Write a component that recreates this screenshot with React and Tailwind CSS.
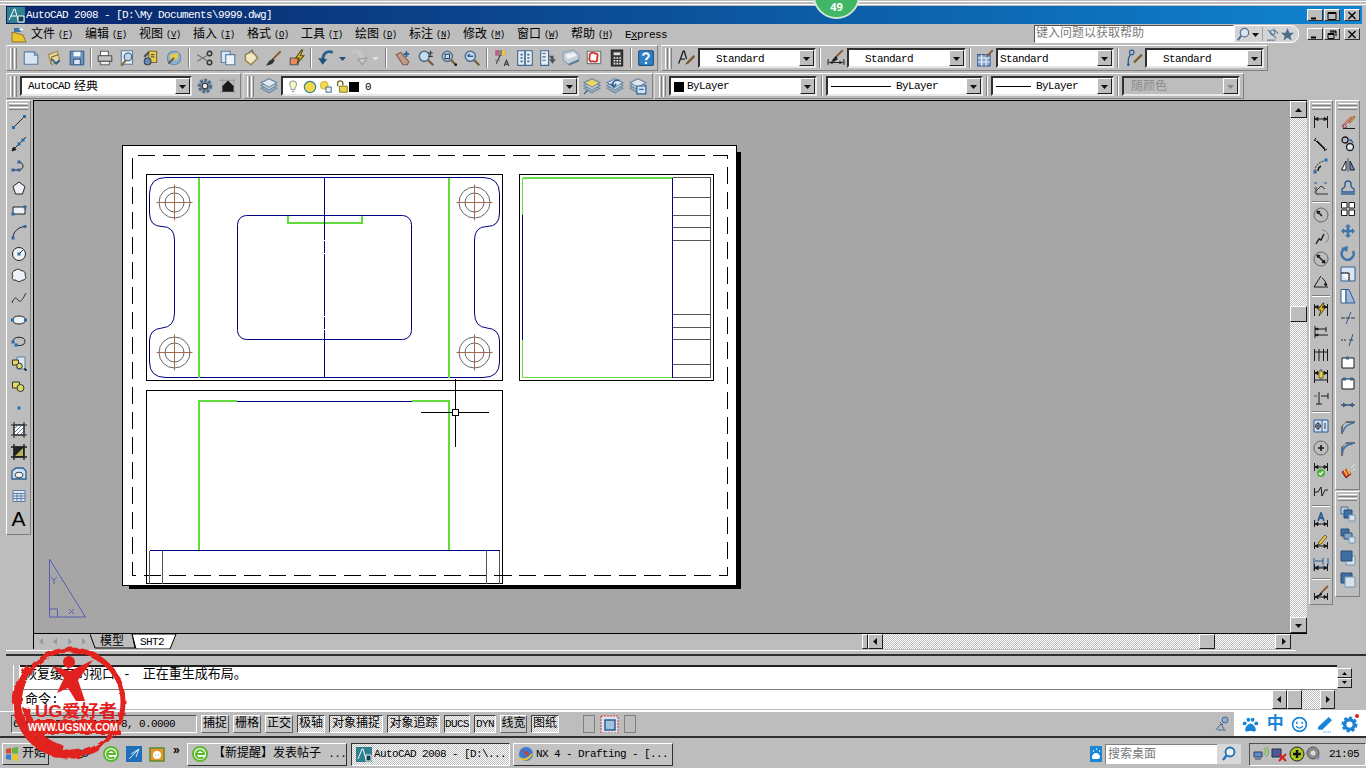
import React from "react";

const dither = "bg-[repeating-conic-gradient(#ffffff_0_25%,#bdbdbd_0_50%)] bg-[length:2px_2px]";
const raised = "border border-t-white border-l-white border-r-[#303030] border-b-[#303030]";
const sunken = "border border-t-[#505050] border-l-[#505050] border-r-white border-b-white";

const L = ({ children }) => <span className="text-[11px] tracking-[-0.6px]">{children}</span>;

const Ic = ({ children, s = 16 }) => (
  <svg width={s} height={s} viewBox="0 0 16 16" fill="none" stroke="#1a1a1a" strokeWidth="1" className="shrink-0">
    {children}
  </svg>
);
const Pt = ({ x, y }) => <rect x={x - 1.5} y={y - 1.5} width="3" height="3" fill="#2a6aa8" stroke="none" />;
const Dim = () => <path d="M1.5 2v12M14.5 2v12M2 5h12M2 5l3-1.5v3zM14 5l-3-1.5v3z" fill="#1a1a1a" />;
const DimLow = () => <path d="M1.5 8v7M14.5 8v7M2 12h12M2 12l3-1.5v3zM14 12l-3-1.5v3z" fill="#1a1a1a" />;
const Glass = ({ c = "#c8dcf0" }) => (
  <>
    <circle cx="6.5" cy="6.5" r="4.5" fill={c} stroke="#55708f" strokeWidth="1.4" />
    <path d="M10 10l4.5 4.5" stroke="#7a5a30" strokeWidth="2" />
  </>
);
const Layers = ({ top = "#dfe8f0" }) => (
  <>
    <path d="M1 10l7-3.5L15 10l-7 4z" fill="#9fb3c4" stroke="#6f8aa0" />
    <path d="M1 7.5L8 4l7 3.5L8 11.5z" fill="#c5d3de" stroke="#6f8aa0" />
    <path d="M1 5l7-3.5L15 5 8 9z" fill={top} stroke="#6f8aa0" />
  </>
);

const std = {
  new: <><path d="M2 2.5h9l3 3v8H2z" fill="#d9e6f2" stroke="#5b7fa3" /><path d="M11 2.5v3h3" stroke="#5b7fa3" /></>,
  open: <><path d="M3 5l8-3 2 8-7 4z" fill="#e9d9a0" stroke="#a08a4a" /><path d="M12 5l-6 2-1 6" stroke="#8a7236" /><path d="M6 9l4 4 3-3" stroke="#2c5d94" strokeWidth="1.6" /></>,
  save: <><path d="M2 2h12v12H2z" fill="#6f94bd" stroke="#365f8c" /><path d="M5 2.5h6v4H5z" fill="#f2f5f8" stroke="none" /><path d="M5 9h6v5H5z" fill="#dfe6ee" stroke="#365f8c" /></>,
  plot: <><path d="M4 2h7v4H4z" fill="#fff" stroke="#666" /><path d="M2 6h12v5H2z" fill="#c4c4c4" stroke="#555" /><path d="M4 11h8v3H4z" fill="#eee" stroke="#666" /></>,
  prev: <><path d="M2 1.5h10v12H2z" fill="#e4eef6" stroke="#5b7fa3" /><circle cx="8" cy="7" r="3.4" fill="#bcd6ea" stroke="#456" /><path d="M6 10l-4 5" stroke="#8a6a30" strokeWidth="1.8" /></>,
  publish: <><path d="M6 2h7v10H6z" fill="#e7c94f" stroke="#7c6a24" /><path d="M2 7l4-4" stroke="#555" strokeWidth="2" /><circle cx="5" cy="11" r="3" fill="#6a87b5" stroke="#345" /><path d="M8 5h3M8 7h3" stroke="#555" /></>,
  dwf: <><circle cx="8" cy="8" r="6" fill="#8db0d0" stroke="#6a8aa8" /><path d="M4 5l8-2-1 6-6 2z" fill="#e7c94f" stroke="none" /><path d="M3 13l5-5" stroke="#555" strokeWidth="1.6" /></>,
  cut: <><circle cx="12" cy="4" r="2" stroke="#333" strokeWidth="1.3" /><circle cx="12" cy="12" r="2" stroke="#333" strokeWidth="1.3" /><path d="M1 5l10 6M1 11l10-6" stroke="#666" /></>,
  copy: <><path d="M2 2h8v10H2z" fill="#d9e6f2" stroke="#5b7fa3" /><path d="M6 5h8v9H6z" fill="#edf3f9" stroke="#5b7fa3" /></>,
  paste: <><path d="M3 5l6-3 5 6-6 6-5-4z" fill="#efe7c5" stroke="#9a8340" strokeWidth="1.3" /><path d="M6 3l3-2 1 3" fill="#aaa" stroke="#666" /></>,
  brush: <><path d="M14 2L7 9" stroke="#8a5a30" strokeWidth="1.7" /><path d="M7 9l-3 2-2 3 4-1 2-3z" fill="#333" stroke="#333" /></>,
  block: <><path d="M2 8h7v6H2z" fill="#e98a60" stroke="#555" /><path d="M12 1L7 8h3l-2 5 6-7h-3l2-5z" fill="#e9c52c" stroke="#5a4a10" /></>,
  undo: <><path d="M14 3c-5-2-9 1-9 7" stroke="#2c5d94" strokeWidth="2.4" /><path d="M1 8l4 6 4-5z" fill="#22507f" stroke="none" /></>,
  redo: <><path d="M2 3c5-2 9 1 9 7" stroke="#d5d5d5" strokeWidth="2.6" /><path d="M2 3c5-2 9 1 9 7" stroke="#9a9a9a" strokeWidth="0.6" /><path d="M15 8l-4 6-4-5z" fill="#c9c9c9" stroke="#999" /></>,
  pan: <><path d="M2 5l6 9h4l1-3-7-8z" fill="#bf9a85" stroke="#855f55" /><path d="M11 2v5M8.5 4.5h5" stroke="#2c5d94" strokeWidth="1.6" /></>,
  zoomR: <><Glass /><path d="M12 1.5v4M10 3.5h4M10 6.5h4" stroke="#333" /></>,
  zoomW: <><Glass /><path d="M4.5 4.5h4v4h-4z" stroke="#345" /><path d="M13 13h2v2h-2z" fill="#111" stroke="none" /></>,
  zoomP: <><Glass /><path d="M4 6.5h5M4 6.5l2-2" stroke="#2c5d94" strokeWidth="1.3" /></>,
  props: <><path d="M2 1h9v5H2z" fill="#d44f9a" stroke="none" /><path d="M5 1h2v5H5z" fill="#4fb34f" stroke="none" /><path d="M8 1h3v5H8z" fill="#e7c94f" stroke="none" /><path d="M3 13l3-7h1M10 15l2-5 2 5M11 13.5h2" stroke="#333" /><path d="M2 10h4" stroke="#777" /></>,
  design: <><path d="M1.5 1.5h13v13h-13z" fill="#e4eef6" stroke="#44688c" /><path d="M8 1.5v13M4 5h2M10 5h2M4 8h2M10 8h2M4 11h2M10 11h2" stroke="#44688c" strokeWidth="1.5" /></>,
  tool: <><path d="M1.5 1.5h7v13h-7z" fill="#e4eef6" stroke="#44688c" /><path d="M3 4h3M3 7h3M3 10h3" stroke="#44688c" /><path d="M9 6l4 0v3h2l-3 4-3-4h2z" fill="#555" stroke="none" /></>,
  sheet: <><path d="M1 3l9-2 5 4v5L6 14 1 10z" fill="#c4cfd9" stroke="#8aa0b4" /><path d="M3 5l8-2 2 3-8 3z" fill="#eef2f6" stroke="none" /><path d="M6 14l9-4" stroke="#5f7d9a" strokeWidth="2" /></>,
  markup: <><path d="M2 2h12v11H2z" fill="#ececec" stroke="#777" /><path d="M5 4c2-2 3 0 4 0s3 0 2 3 1 3-1 4-3-1-4 0-3-2-2-3-1-3 1-4z" fill="#fff" stroke="#d0342c" strokeWidth="1.6" /></>,
  calc: <><path d="M3 1h10v14H3z" fill="#3a3a3a" stroke="#222" /><path d="M5 3h6v2.5H5z" fill="#ddd" stroke="none" /><path d="M5 8h1.5M7.5 8h1.5M10 8h1.5M5 10.5h1.5M7.5 10.5h1.5M10 10.5h1.5M5 13h1.5M7.5 13h1.5M10 13h1.5" stroke="#eee" strokeWidth="1.4" /></>,
  help: <><path d="M1.5 2.5q0-1 1-1h11q1 0 1 1v11q0 1-1 1h-11q-1 0-1-1z" fill="#2f7fc4" stroke="#1c4f84" /><path d="M5.5 6c0-3 5-3 5 0 0 2-2.5 2-2.5 4" stroke="#fff" strokeWidth="1.8" /><path d="M7 11.5h2v2H7z" fill="#fff" stroke="none" /></>,
  textS: <><path d="M1.5 13L5.5 2h1l2 7M3 9h4" stroke="#222" strokeWidth="1.2" /><path d="M15 5l-6 6-2 3 3-1 6-6z" fill="#7a5a30" stroke="none" /></>,
  dimS: <><path d="M14 1L7 8" stroke="#8a5a30" strokeWidth="1.8" /><path d="M8 7l-3 3 1 1 3-2z" fill="#222" stroke="#222" /><path d="M1 9v5M15 9v5M2 12h12" stroke="#222" /><path d="M2 12l3-1.5v3zM14 12l-3-1.5v3z" fill="#222" stroke="none" /></>,
  tableS: <><path d="M1.5 5h11v10h-11z" fill="#8aa8d0" stroke="#3a5f94" /><path d="M1.5 8h11M1.5 11.5h11M5 5v10M9 5v10" stroke="#e8eef6" /><path d="M15 1L9 7" stroke="#8a5a30" strokeWidth="1.8" /></>,
  leadS: <><circle cx="6" cy="3" r="2" stroke="#2c5d94" /><path d="M5 5C2 8 3 11 3 14" stroke="#2c5d94" strokeWidth="1.2" /><circle cx="3" cy="14" r="1.2" fill="#2c5d94" stroke="none" /><path d="M15 5L8 12" stroke="#7a5a30" strokeWidth="2" /></>,
  wsGear: <><circle cx="8" cy="8" r="5" fill="#8a99a6" stroke="#4c6d8c" strokeWidth="3" strokeDasharray="2.5 1.2" /><circle cx="8" cy="8" r="2.5" fill="#e6e6e6" stroke="#333" /></>,
  wsHouse: <><path d="M1 3h14M1 13h14M3 1v14M13 1v14" stroke="#888" strokeDasharray="1 1" /><path d="M3 8l5-5 5 5v5H3z" fill="#1a1a1a" stroke="none" /></>,
  bulb: <><path d="M3 5a4 4 0 118 0c0 2-2 3-2 6H5c0-3-2-4-2-6z" fill="#fdf5b8" stroke="#6a8aa0" /><path d="M5.5 12.5h3V14h-3z" fill="#9ab" stroke="none" /></>,
  sun: <><circle cx="8" cy="8" r="6.5" fill="#f1d94a" stroke="#3f7f9a" strokeWidth="1.3" /></>,
  frozen: <><circle cx="6" cy="6" r="4.5" fill="#f1d94a" stroke="#c9b040" /><path d="M8 8h6v6H8z" fill="#eaf2f8" stroke="#33566f" /></>,
  lock: <><path d="M3 7V4a3 3 0 016 0v2" stroke="#7a6a1c" strokeWidth="1.6" /><path d="M5 7h9v7H5z" fill="#e6d34a" stroke="#7a6a1c" /></>,
  layerUp: <><Layers top="#ead663" /><path d="M1 15l3-3" stroke="#2c5d94" strokeWidth="1.2" /></>,
  layerBk: <><Layers /><path d="M12 3C6 2 5 6 7 9M4 6l3 3 2-3" stroke="#2c5d94" strokeWidth="1.4" /></>,
  layerSt: <><Layers /><path d="M7 8h8v7H7z" fill="#cfe0f0" stroke="#2c5d94" /><path d="M9 11h4" stroke="#2c5d94" /></>,
};

const lft = [
  <><path d="M2.5 13.5l11-11" stroke="#222" /><Pt x={2.5} y={13.5} /><Pt x={13.5} y={2.5} /></>,
  <><path d="M1 15L15 1" stroke="#222" /><Pt x={8} y={8} /><Pt x={12} y={4} /><path d="M1 15l4-1.5L2.5 11z" fill="#222" /></>,
  <><path d="M1.5 12h6c6 0 6-8 0-8" stroke="#222" /><Pt x={2} y={12} /><Pt x={8} y={12} /><Pt x={8} y={4} /></>,
  <><path d="M8 2l6 4.5-2.5 7.5h-7L2 6.5z" fill="#eef2f6" stroke="#222" /></>,
  <><path d="M2 5h12v7H2z" fill="#eef2f6" stroke="#222" /><Pt x={2} y={12} /><Pt x={14} y={5} /></>,
  <><path d="M2 14C2 8 7 3 14 2.5" stroke="#222" /><Pt x={2} y={14} /><Pt x={14} y={2.5} /></>,
  <><circle cx="8" cy="8" r="6.5" fill="#eef2f6" stroke="#222" /><path d="M8 8l4-4" stroke="#222" /><Pt x={8} y={8} /></>,
  <><path d="M5 2c2-2 5 0 5 1 2-1 5 1 4 4 2 2 0 6-3 5-1 2-5 2-6 0-3 1-5-2-3-4-2-2 0-6 3-6z" fill="#eef2f6" stroke="#222" /></>,
  <><path d="M1 13c2-6 4-6 6-3s4 1 8-7" stroke="#333" /></>,
  <><ellipse cx="8" cy="8" rx="6.5" ry="4" fill="#eef2f6" stroke="#222" /><Pt x={1.5} y={8} /><Pt x={14.5} y={8} /></>,
  <><path d="M2 7c0-5 12-5 12 0s-6 5-9 4" stroke="#222" /><Pt x={2} y={8} /><Pt x={5} y={11} /></>,
  <><path d="M6 1h8v12H6z" fill="#d9e6f2" stroke="#5b7fa3" /><path d="M1.5 4h6v5h-6z" fill="#e7d862" stroke="#333" /><circle cx="8.5" cy="10" r="2.8" fill="#d9d96a" stroke="#333" /><path d="M13 13l2 2v-2z" fill="#111" /></>,
  <><path d="M1.5 4h7v6h-7z" fill="#e7d862" stroke="#333" /><circle cx="9.5" cy="10" r="3.5" fill="#d9d96a" stroke="#333" /></>,
  <><rect x="6.5" y="6.5" width="3" height="3" fill="#2a6aa8" stroke="none" /></>,
  <><path d="M3 3h10v10H3z" fill="#fff" stroke="#222" /><path d="M3 7l4-4M3 11l8-8M5 13l8-8M9 13l4-4" stroke="#5b7fa3" /><path d="M0 3h16M0 13h16M3 0v16M13 0v16" stroke="#222" /></>,
  <><path d="M3 3h10v10H3z" fill="#222" /><path d="M4 12L12 4v8z" fill="#b7b15a" stroke="none" /><path d="M0 3h16M0 13h16M3 0v16M13 0v16" stroke="#222" strokeWidth="1.4" /></>,
  <><path d="M1 5l4-3h7l3 3v8H1z" fill="#cfe0f0" stroke="#2c5d94" strokeWidth="1.3" /><ellipse cx="8" cy="9" rx="4" ry="2.8" fill="#eef2f6" stroke="#444" /></>,
  <><path d="M2 2.5h12v11H2z" fill="#dce6f4" stroke="#5b7fa3" /><path d="M2 5.5h12M2 8h12M2 10.5h12M6 5.5v8M10 5.5v8" stroke="#5b7fa3" /></>,
];

const r1 = [
  [<Dim />, <><path d="M2 4l10 10M3 2l-2 3M14 13l-3 2" /><path d="M4 5l8 8" strokeWidth="1.4" /></>, <><path d="M2 13c0-5 4-9 9-10" strokeDasharray="2 1" stroke="#333" /><path d="M8 8c-2 1-3 3-3 5" strokeWidth="1.4" /><Pt x={2} y={14} /><Pt x={13} y={2} /></>, <><path d="M3 14V7M3 14h12M3 11l5-5 4 3" stroke="#333" /><path d="M1 3h3M11 3h3M1 8h1M1 12h1" stroke="#2c5d94" /></>],
  [<><circle cx="8" cy="8" r="7" stroke="#666" /><path d="M9 9L4 4" strokeWidth="1.5" /><path d="M4 4l3 .5L4.5 7z" fill="#222" /></>, <><path d="M9 1a7 7 0 013 13" stroke="#888" /><path d="M3 15l3-5 2 1 3-6" strokeWidth="1.4" /></>, <><circle cx="8" cy="8" r="7" stroke="#666" /><path d="M4 4l8 8" strokeWidth="1.5" /><path d="M4 4l3 .5L4.5 7zM12 12l-3-.5L11.5 9z" fill="#222" /></>, <><path d="M1 14h14M1 14L8 3" /><path d="M9 5a9 9 0 014 8" /><path d="M13 13l-2-2h3z" fill="#222" /></>],
  [<><Dim /><path d="M10 1L5 8h3l-2 6 6-8H9l2-5z" fill="#e9c52c" stroke="#5a4a10" /></>, <><path d="M2 2v12M13 3v5M2 5h11M2 11h13" /><path d="M2 5l3-1v2zM2 11l3-1v2z" fill="#222" /></>, <><path d="M1.5 3v12M6 3v12M10.5 3v12M14.5 3v12M2 6h12" /></>, <><Dim /><path d="M2 12h12M1.5 9v6M14.5 9v6" /><path d="M6 3h4v7H6z" fill="#e7c94f" stroke="#7a6a1c" /><path d="M8 1v2M8 10v2" stroke="#2c5d94" /></>, <><path d="M6 2v12M3 14h6M12 6H8M12 6h3M15 3v6" /><path d="M1 6h3" stroke="#2c5d94" /></>],
  [<><path d="M1 2h14v12H1z" fill="#cfe0f0" stroke="#2c5d94" /><path d="M9 2v12" stroke="#2c5d94" /><circle cx="5" cy="8" r="2.5" stroke="#333" /><path d="M5 4v8M2 8h6M12 5v6" stroke="#333" /></>, <><circle cx="8" cy="8" r="7" stroke="#666" /><path d="M8 5v6M5 8h6" strokeWidth="1.6" /></>, <><path d="M1.5 1v8M14.5 1v8M2 5h12" /><path d="M2 5l3-1.5v3zM14 5l-3-1.5v3z" fill="#222" /><circle cx="8" cy="11" r="4" fill="#4faf3a" stroke="none" /><path d="M6 11l1.5 1.5L10 9.5" stroke="#fff" strokeWidth="1.3" /></>, <><path d="M1.5 4v8M2 8h3l3-5 1 9 3-6h3" /></>],
  [<><DimLow /><path d="M5 9l3-8 3 8M6 6h4" stroke="#2c5d94" strokeWidth="1.8" /></>, <><DimLow /><path d="M12 1l2 2-6 7-3 1 1-3z" fill="#e7c94f" stroke="#6a5a20" /></>, <><path d="M1 2v13M15 2v7M10 2v7M2 5h8M2 11h13M5 9v5" stroke="#2c5d94" /><DimLow /></>],
  [<><DimLow /><path d="M15 1L7 9" stroke="#8a5a30" strokeWidth="1.8" /><path d="M8 8l-3 3 3-1 1-1z" fill="#222" /></>],
];

const r2 = [
  <><path d="M2 13L12 3" stroke="#c77" strokeWidth="3" /><path d="M9 8l5-6 1 1-5 6z" fill="#e6c84a" stroke="#8a6a20" /><path d="M3 14.5h12" /><path d="M4 10l3 3-3 1-1-1z" fill="#f2a2a2" stroke="#666" /></>,
  <><circle cx="5" cy="4" r="3" strokeWidth="1.3" /><circle cx="10" cy="11" r="3.5" fill="#d9e6f2" strokeWidth="1.3" /><path d="M7 4h4l2 3" stroke="#2c5d94" strokeWidth="1.3" /></>,
  <><path d="M8 1v14" stroke="#2c5d94" /><path d="M6 4v9H1.5z" fill="#fff" /><path d="M10 4v9h4.5z" fill="#6f94bd" /></>,
  <><path d="M2 13V10c0-1 3-1 3-3V5c0-4 6-4 6 0v2c0 2 3 2 3 3v3z" stroke="#2c5d94" strokeWidth="1.4" /><path d="M1 15h14" stroke="#2c5d94" strokeWidth="1.4" /></>,
  <><path d="M1.5 1.5H7V7H1.5zM9 1.5h5.5V7H9zM1.5 9H7v5.5H1.5zM9 9h5.5v5.5H9z" fill="#fff" /></>,
  <><path d="M8 1l3 3H9.3v2.7H12V5l3 3-3 3V9.3H9.3V12H11l-3 3-3-3h1.7V9.3H4V11L1 8l3-3v1.7h2.7V4H5z" fill="#3e74ad" stroke="none" /></>,
  <><path d="M4 4a6 6 0 109 2" stroke="#3e74ad" strokeWidth="2.6" /><path d="M1 3l7-2-1 6z" fill="#3e74ad" stroke="none" /></>,
  <><path d="M1 1h14v14H1z" fill="#d9e6f2" stroke="#2c5d94" /><path d="M1 7h8v8" fill="#fff" /><path d="M1 7h8v8" stroke="#333" strokeDasharray="1 1" fill="none" /></>,
  <><path d="M1 1.5h5V15H1z" fill="#fff" stroke="#2c5d94" /><path d="M6 1.5h3L15 15H6z" fill="#9db9d4" stroke="#2c5d94" /></>,
  <><path d="M1 8h14" stroke="#333" strokeDasharray="4 1" /><path d="M11 2L6 14" stroke="#2c5d94" /></>,
  <><path d="M1 8h6" stroke="#333" strokeDasharray="2 1" /><path d="M9 8h4" stroke="#333" /><path d="M13 2L9 14" stroke="#2c5d94" /></>,
  <><path d="M2 4h12v10H2z" fill="#fff" /><rect x="6" y="2.5" width="3" height="3" fill="#2a6aa8" stroke="none" /></>,
  <><path d="M2 4h12v10H2z" fill="#fff" /><rect x="3" y="2.5" width="3" height="3" fill="#2a6aa8" stroke="none" /><rect x="10" y="2.5" width="3" height="3" fill="#2a6aa8" stroke="none" /></>,
  <><path d="M1 8h14" stroke="#222" /><path d="M7 8L3 5.5v5zM9 8l4-2.5v5z" fill="#2c5d94" stroke="none" /></>,
  <><path d="M6 3h9M2 7v8" /><path d="M2 7l4-4" stroke="#333" strokeDasharray="1 1" /><path d="M3 13C4 8 8 5 14 4" stroke="#3e74ad" strokeWidth="1.5" /></>,
  <><path d="M6 2h9M2 6v9" /><path d="M2 6l4-4" stroke="#333" strokeDasharray="1 1" /><path d="M2.5 12c0-5 4-9 10-9" stroke="#3e74ad" strokeWidth="2" /></>,
  <><path d="M2 9l5-3 4 5-5 4z" fill="#d8392c" stroke="#7a1c1c" /><path d="M4 7l3 5M7 6l3 5" stroke="#e6c84a" strokeWidth="1.5" /><path d="M11 5l4-4M13 7l2-1" stroke="#e6e6e6" /></>,
];
const Order = ({ v }) => (
  <Ic>
    {v === 0 && <><path d="M1 1h7v7H1z" fill="#bcd0e4" stroke="#4c6d8c" /><path d="M4 4h8v8H4z" fill="#3e6ea2" stroke="#2c4f74" /><path d="M9 9h6v6H9z" fill="#d5e2ee" stroke="#7b96ae" /></>}
    {v === 1 && <><path d="M1 1h8v7H1z" fill="#3e6ea2" stroke="#2c4f74" /><path d="M4 5h8v6H4z" fill="#7ea2c6" stroke="#2c4f74" /><path d="M9 9h6v6H9z" fill="#d5e2ee" stroke="#7b96ae" /></>}
    {v === 2 && <><path d="M6 6h9v9H6z" fill="#d5e2ee" stroke="#7b96ae" /><path d="M1 1h11v10H1z" fill="#3e6ea2" stroke="#2c4f74" /></>}
    {v === 3 && <><path d="M1 1h11v10H1z" fill="#3e6ea2" stroke="#2c4f74" /><path d="M5 5h10v10H5z" fill="#d5e2ee" stroke="#7b96ae" /></>}
  </Ic>
);

const T = ({ d }) => <div className="w-[23px] h-full flex items-center justify-center shrink-0"><Ic s={18}>{d}</Ic></div>;
const V = ({ children }) => <div className="h-[22px] flex items-center justify-center shrink-0">{children}</div>;
const Sep = ({ className }) => (
  <div className={`flex justify-center items-center h-full shrink-0 ${className}`}>
    <div className="w-[2px] h-[20px] border-l border-l-[#808080] border-r border-r-white" />
  </div>
);
const HSep = ({ className }) => (
  <div className={`flex items-center justify-center shrink-0 ${className}`}>
    <div className="w-[18px] h-[2px] border-t border-t-[#808080] border-b border-b-white" />
  </div>
);
const Grip = ({ className }) => (
  <div className={`flex justify-center items-center gap-[1px] h-full shrink-0 ${className}`}>
    <div className="w-[3px] h-[21px] border-l border-l-white border-r border-r-[#808080]" />
    <div className="w-[3px] h-[21px] border-l border-l-white border-r border-r-[#808080]" />
  </div>
);
const VGrip = ({ className }) => (
  <div className={`flex flex-col items-center justify-center gap-[1px] shrink-0 ${className}`}>
    <div className="w-[19px] h-[3px] border-t border-t-white border-b border-b-[#808080]" />
    <div className="w-[19px] h-[3px] border-t border-t-white border-b border-b-[#808080]" />
  </div>
);

const Arrow = ({ dir = "down", c = "#111" }) => {
  const p = { down: "M1 3h7L4.5 7z", up: "M1 7h7L4.5 3z", left: "M6 1v7L2 4.5z", right: "M3 1v7l4-3.5z" }[dir];
  return (
    <svg width="9" height="9" viewBox="0 0 9 9">
      <path d={p} fill={c} />
    </svg>
  );
};

const Combo = ({ className, children, disabled }) => (
  <div className={`h-[20px] flex items-center shrink-0 border-2 border-t-[#303030] border-l-[#303030] border-r-[#e8e8e8] border-b-[#e8e8e8] ${disabled ? "bg-[#bdbdbd] text-[#8c8c8c]" : "bg-white text-black"} ${className}`}>
    <div className="flex-1 min-w-0 flex items-center whitespace-nowrap overflow-hidden pt-px">{children}</div>
    <div className="w-[15px] h-[16px] flex items-center justify-center bg-[#bdbdbd] border border-t-white border-l-white border-r-[#202020] border-b-[#202020]">
      <Arrow c={disabled ? "#888" : "#111"} />
    </div>
  </div>
);

const Bar = ({ className, children }) => (
  <div className={`h-[26px] my-auto flex items-center shrink-0 border border-t-white border-l-[#d8d8d8] border-r-[#808080] border-b-[#808080] ${className}`}>{children}</div>
);

const menus = [
  ["文件", "F"], ["编辑", "E"], ["视图", "V"], ["插入", "I"], ["格式", "O"], ["工具", "T"],
  ["绘图", "D"], ["标注", "N"], ["修改", "M"], ["窗口", "W"], ["帮助", "H"],
];

const WinBtn = ({ kind }) => (
  <div className={`w-[16px] h-[12px] flex items-center justify-center bg-[#bdbdbd] ${raised}`}>
    <svg width="10" height="9" viewBox="0 0 10 9" fill="none" stroke="#000">
      {kind === "min" && <path d="M1 7.5h5" strokeWidth="2" />}
      {kind === "max" && <path d="M1 1.5h8v7H1zM1 2.5h8" />}
      {kind === "res" && <path d="M3 1h6v5M3 2h6M1 3.5h6v5H1zM1 4.5h6" />}
      {kind === "x" && <path d="M1.5 1l7 7M8.5 1l-7 7" strokeWidth="1.4" />}
    </svg>
  </div>
);

const Drawing = () => (
  <svg viewBox="34 101 1256 532" width="1256" height="532" className="block shrink-0" fill="none" shapeRendering="crispEdges">
    <path d="M129 152h612v437H129z" fill="#000" />
    <path d="M122.5 145.5h614V585h-614z" fill="#fff" stroke="#000" />
    <path d="M132.5 175V155.5H727V575.5H132.5V175" stroke="#000" strokeDasharray="17 8" />
    <path d="M146.5 174.5h356V380h-356zM519.5 174.5H713V380H519.5zM146.5 390.5h356v193h-356z" stroke="#000" />
    <g shapeRendering="auto">
      <path d="M166 177.5H483Q499.5 177.5 499.5 194V213Q499.5 226.5 487 226.5Q474.5 226.5 474.5 240V313Q474.5 327 487 328Q499.5 329 499.5 341V362Q499.5 377.5 483 377.5H166Q149.5 377.5 149.5 362V341Q149.5 329 162 328Q174.5 327 174.5 313V240Q174.5 226.5 162 226.5Q149.5 226.5 149.5 213V194Q149.5 177.5 166 177.5Z" stroke="#000080" />
      <rect x="237.5" y="215.5" width="174" height="124" rx="9" stroke="#000080" />
      {[[174.5, 202.5], [474.5, 202.5], [174.5, 352.5], [474.5, 352.5]].map(([x, y]) => (
        <g key={x + "-" + y}>
          <circle cx={x} cy={y} r="15.5" stroke="#666" />
          <circle cx={x} cy={y} r="9.5" stroke="#666" />
          <path d={`M${x - 18} ${y}h36M${x} ${y - 18}v36`} stroke="#a5694f" />
        </g>
      ))}
    </g>
    <path d="M199 177.5v200M449 177.5v200M287.5 215.5v7h74v-7" stroke="#5fdc3c" strokeWidth="2" />
    <path d="M324.5 177.5v200" stroke="#000080" strokeDasharray="62 1 12 1" />
    <path d="M522.5 178h150M522.5 377.5h150M522.5 178v37M522.5 340v37.5" stroke="#66dd44" strokeWidth="1.5" />
    <path d="M522.5 215v125M672.5 177.5v200" stroke="#000080" />
    <path d="M672.5 177.5H710.5V377.5H672.5M672.5 197.5h38M672.5 215.5h38M672.5 227.5h38M672.5 240.5h38M672.5 314.5h38M672.5 327.5h38M672.5 339.5h38M672.5 364.5h38" stroke="#555" />
    <path d="M199 550V401H237M412 401h37V550" stroke="#5fdc3c" strokeWidth="2" />
    <path d="M237 401.5h175M149.5 550.5h350" stroke="#000080" />
    <path d="M149.5 550.5v33M162.5 550.5v33M486.5 550.5v33M499.5 550.5v33" stroke="#555" />
    <path d="M497 575.5h15" stroke="#000" />
    <path d="M455.5 379v33M455.5 412v35M421 412.5h68" stroke="#000" />
    <rect x="452.5" y="409.5" width="6" height="6" fill="#fff" stroke="#000" />
    <path d="M49.5 559v58h36zM49.5 609h8v8" stroke="#5a5ab8" shapeRendering="auto" />
    <path d="M51 577l3 3 3-3M54 580v4M69 609l5 5M74 609l-5 5" stroke="#5a5ab8" shapeRendering="auto" />
  </svg>
);

const Thumb = ({ className, children }) => (
  <div className={`flex items-center justify-center bg-[#bdbdbd] shrink-0 border border-t-white border-l-white border-r-[#202020] border-b-[#202020] ${className}`}>{children}</div>
);

const Stat = ({ children, on, className }) => (
  <div className={`h-[18px] flex items-center justify-center shrink-0 border ${on ? `${dither} border-t-[#404040] border-l-[#404040] border-r-white border-b-white` : "bg-[#c8c8c8] border-t-white border-l-white border-r-[#606060] border-b-[#606060]"} ${className}`}>{children}</div>
);

const Stamp = () => (
  <svg className="absolute left-0 top-[625px] pointer-events-none" width="140" height="143" viewBox="0 625 140 143" fill="none">
    <defs>
      <filter id="rough" x="-10%" y="-10%" width="120%" height="120%">
        <feTurbulence type="fractalNoise" baseFrequency="0.12" numOctaves="2" seed="4" />
        <feDisplacementMap in="SourceGraphic" scale="5" />
      </filter>
    </defs>
    <g filter="url(#rough)">
      <circle cx="71" cy="702" r="52" stroke="#e2201f" strokeWidth="5" />
      <path d="M30 668A52 52 0 0 0 80 753" stroke="#e2201f" strokeWidth="9" />
      <path d="M26 708A48 48 0 0 0 62 748" stroke="#e2201f" strokeWidth="6" />
      <path d="M92 656A52 52 0 0 1 122 690" stroke="#e2201f" strokeWidth="4" />
      <path d="M28 720h92v14H28z" fill="#e2201f" />
    </g>
    <circle cx="69" cy="662" r="6" fill="#e2201f" />
    <path d="M52 666L70 671L93 660L78 680L85 701L76 701L68 688L57 693L64 678z" fill="#e2201f" />
    <text x="35" y="717" textLength="82" lengthAdjust="spacingAndGlyphs" fill="#e2201f" fontSize="17" fontWeight="700" fontFamily="Liberation Sans, Noto Sans CJK SC, sans-serif">UG爱好者</text>
    <text x="28" y="731" textLength="90" lengthAdjust="spacingAndGlyphs" fill="#fff" fontSize="11" fontWeight="700" fontFamily="Liberation Sans, sans-serif">WWW.UGSNX.COM</text>
  </svg>
);

export default function App() {
  return (
    <div className="relative w-[1366px] h-[768px] overflow-hidden bg-[#bdbdbd] text-black text-[12px] leading-none font-['Liberation_Mono','Noto_Sans_CJK_SC',monospace] flex flex-col">
      {/* window frame */}
      <div className="h-[6px] shrink-0 flex flex-col justify-center gap-[2px]">
        <div className="h-px bg-white" />
        <div className="h-px bg-white" />
      </div>

      <div className="pl-[6px] pr-[4px] shrink-0">
        <div className="h-[18px] flex items-center bg-linear-to-r from-[#0a246a] to-[#1084d0]">
          <svg width="18" height="16" viewBox="0 0 18 16" className="ml-px shrink-0">
            <path d="M0 0h18v16H0z" fill="#2f7f8f" />
            <path d="M2 13L7 2h1l3 11M4 9h5" stroke="#fff" fill="none" />
            <path d="M11 9h6v6h-6z" fill="#0f3f4f" stroke="#fff" />
          </svg>
          <span className="ml-[1px] text-white"><L>AutoCAD 2008 - [D:\My Documents\9999.dwg]</L></span>
          <div className="ml-auto flex mr-[2px] gap-[1px]">
            <WinBtn kind="min" />
            <WinBtn kind="max" />
            <div className="w-[2px]" />
            <WinBtn kind="x" />
          </div>
        </div>
      </div>

      {/* menu */}
      <div className="h-[20px] shrink-0 flex items-center pl-[11px]">
        <svg width="16" height="17" viewBox="0 0 16 17" className="shrink-0">
          <path d="M1 6l11 3 3 7H1z" fill="#e9c52c" stroke="#8a7236" />
          <path d="M3 2h5l3 4H3z" fill="#3e74ad" />
          <path d="M10 1l1 2 2 .5-2 .5-1 2-.5-2-2-.5 2-.5z" fill="#fff" />
        </svg>
        <div className="flex ml-[4px] pt-[2px]">
          {menus.map(([t, k]) => (
            <div key={k} className="w-[54px] flex items-center shrink-0 whitespace-nowrap">
              {t}
              <span className="text-[9px] tracking-[-0.5px] ml-[3px]">(<span className="underline">{k}</span>)</span>
            </div>
          ))}
          <span><L>E<span className="underline">x</span>press</L></span>
        </div>
        <div className="ml-[367px] flex items-center h-[18px]">
          <div className={`w-[200px] h-[18px] bg-white flex items-center pl-[1px] text-[#7a7a7a] ${sunken} border-t-[#303030] border-l-[#303030]`}>键入问题以获取帮助</div>
          <div className="w-[65px] h-[18px] flex items-center rounded-r-lg border border-white bg-[#d4d4d4] pl-[1px]">
            <Ic s={15}><circle cx="9" cy="6" r="4.5" fill="#d9e6f2" stroke="#4c6d8c" strokeWidth="1.3" /><path d="M5.5 9.5L2 14" stroke="#4c6d8c" strokeWidth="2" /></Ic>
            <Arrow />
            <div className="w-px h-[14px] bg-[#a0a0a0] mx-[2px]" />
            <Ic s={15}><path d="M3 3l9 9M9 2l5 5" stroke="#6a8aa0" strokeWidth="1.4" /><circle cx="8" cy="6" r="2.5" stroke="#4c6d8c" /><path d="M2 14h9" stroke="#4c6d8c" /></Ic>
            <Ic s={15}><path d="M8 1l2 5h5l-4 3.5 1.5 5L8 11.5 3.5 14.5 5 9.500 1 6h5z" fill="#4c6d8c" stroke="none" /></Ic>
          </div>
          <div className="ml-[8px] flex gap-[1px]">
            <WinBtn kind="min" />
            <WinBtn kind="res" />
            <div className="w-[2px]" />
            <WinBtn kind="x" />
          </div>
        </div>
      </div>

      {/* toolbar row 1 */}
      <div className="h-[28px] shrink-0 flex pl-[6px]">
        <Bar>
          <Grip className="w-[12px]" />
          <T d={std.new} /><T d={std.open} /><T d={std.save} />
          <Sep className="w-[5px]" />
          <T d={std.plot} /><T d={std.prev} /><T d={std.publish} /><T d={std.dwf} />
          <Sep className="w-[8px]" />
          <T d={std.cut} /><T d={std.copy} /><T d={std.paste} /><T d={std.brush} /><T d={std.block} />
          <Sep className="w-[6px]" />
          <T d={std.undo} />
          <div className="w-[10px] flex justify-center"><Arrow c="#22507f" /></div>
          <T d={std.redo} />
          <div className="w-[10px] flex justify-center"><Arrow c="#ddd" /></div>
          <Sep className="w-[11px]" />
          <T d={std.pan} /><T d={std.zoomR} /><T d={std.zoomW} /><T d={std.zoomP} />
          <Sep className="w-[7px]" />
          <T d={std.props} /><T d={std.design} /><T d={std.tool} /><T d={std.sheet} /><T d={std.markup} /><T d={std.calc} />
          <Sep className="w-[6px]" />
          <T d={std.help} />
        </Bar>
        <Bar className="ml-[3px]">
          <Grip className="w-[12px]" />
          <div className="w-[24px] flex justify-center shrink-0"><Ic s={18}>{std.textS}</Ic></div>
          <Combo className="w-[118px]"><span className="pl-[16px]"><L>Standard</L></span></Combo>
          <Sep className="w-[8px]" />
          <div className="w-[23px] flex justify-center shrink-0"><Ic s={18}>{std.dimS}</Ic></div>
          <Combo className="w-[119px]"><span className="pl-[16px]"><L>Standard</L></span></Combo>
          <Sep className="w-[8px]" />
          <div className="w-[22px] flex justify-center shrink-0"><Ic s={18}>{std.tableS}</Ic></div>
          <Combo className="w-[118px]"><span className="pl-[2px]"><L>Standard</L></span></Combo>
          <Sep className="w-[8px]" />
          <div className="w-[23px] flex justify-center shrink-0"><Ic s={18}>{std.leadS}</Ic></div>
          <Combo className="w-[119px]"><span className="pl-[16px]"><L>Standard</L></span></Combo>
          <div className="w-[3px]" />
        </Bar>
      </div>

      {/* toolbar row 2 */}
      <div className="h-[28px] shrink-0 flex pl-[6px]">
        <Bar>
          <Grip className="w-[13px]" />
          <Combo className="w-[172px]"><span className="pl-[6px] flex items-center gap-[4px]"><L>AutoCAD</L><span>经典</span></span></Combo>
          <div className="w-px" />
          <T d={std.wsGear} /><T d={std.wsHouse} />
          <div className="w-px" />
        </Bar>
        <Bar className="ml-[2px]">
          <Grip className="w-[12px]" />
          <div className="w-[25px] flex justify-center shrink-0"><Ic s={18}><Layers /></Ic></div>
          <Combo className="w-[298px]">
            <div className="flex items-center gap-[2px] pl-[4px]">
              <Ic s={14}>{std.bulb}</Ic><Ic s={14}>{std.sun}</Ic><Ic s={14}>{std.frozen}</Ic><Ic s={14}>{std.lock}</Ic>
              <div className="w-[10px] h-[10px] bg-black ml-[-2px]" />
              <span className="ml-[4px]"><L>0</L></span>
            </div>
          </Combo>
          <div className="w-px" />
          <T d={std.layerUp} /><T d={std.layerBk} /><T d={std.layerSt} />
          <div className="w-[3px]" />
        </Bar>
        <Bar className="ml-[1px]">
          <Grip className="w-[14px]" />
          <Combo className="w-[148px]">
            <div className="flex items-center pl-[3px] gap-[3px]"><div className="w-[10px] h-[10px] bg-black" /><L>ByLayer</L></div>
          </Combo>
          <Sep className="w-[9px]" />
          <Combo className="w-[157px]">
            <div className="flex items-center pl-[3px] gap-[5px]"><div className="w-[60px] h-px bg-black" /><L>ByLayer</L></div>
          </Combo>
          <Sep className="w-[8px]" />
          <Combo className="w-[123px]">
            <div className="flex items-center pl-[3px] gap-[5px]"><div className="w-[35px] h-px bg-black" /><L>ByLayer</L></div>
          </Combo>
          <Sep className="w-[8px]" />
          <Combo disabled className="w-[118px]"><span className="pl-[7px]">随颜色</span></Combo>
          <div className="w-[3px]" />
        </Bar>
      </div>

      {/* main */}
      <div className="h-[550px] shrink-0 flex pl-[6px] pr-[4px]">
        <div className="w-[25px] h-[435px] shrink-0 flex flex-col border border-t-white border-l-white border-r-[#808080] border-b-[#808080]">
          <VGrip className="h-[10px]" />
          {lft.map((d, i) => <V key={i}><Ic>{d}</Ic></V>)}
          <V><span className="text-[21px] font-['Liberation_Sans',sans-serif]">A</span></V>
        </div>

        <div className="ml-[2px] w-[1274px] h-[550px] shrink-0 flex flex-col">
          <div className="h-[533px] flex border-t border-t-black border-l border-l-black">
            <div className="w-[1256px] h-[532px] bg-[#a6a6a6] overflow-hidden shrink-0"><Drawing /></div>
            <div className={`flex-1 flex flex-col ${dither}`}>
              <Thumb className="h-[17px]"><Arrow dir="up" /></Thumb>
              <Thumb className="h-[16px] mt-[188px]" />
              <Thumb className="h-[16px] mt-auto"><Arrow /></Thumb>
            </div>
          </div>
          <div className="h-[16px] flex items-stretch border-t border-t-black border-l border-l-black">
            <div className="w-[56px] flex items-center justify-around shrink-0">
              <Arrow dir="left" c="#9a9a9a" /><Arrow dir="left" c="#9a9a9a" /><Arrow dir="right" c="#9a9a9a" /><Arrow dir="right" c="#9a9a9a" />
            </div>
            <svg width="88" height="15" viewBox="0 0 88 15" className="shrink-0">
              <path d="M42 0h44l-6 15H46z" fill="#fff" stroke="#000" />
              <path d="M0 0l5 14h40L42 0" fill="#bdbdbd" stroke="#000" />
            </svg>
            <div className="flex items-center ml-[-88px] w-[88px] relative shrink-0">
              <span className="ml-[10px]">模型</span>
              <span className="ml-[16px]"><L>SHT2</L></span>
            </div>
            <div className="w-[684px] shrink-0 bg-[#bdbdbd]" />
            <Thumb className="w-[6px]" />
            <Thumb className="w-[15px]"><Arrow dir="left" /></Thumb>
            <div className={`flex-1 flex ${dither}`}>
              <Thumb className="w-[16px] ml-[316px]" />
              <Thumb className="w-[16px] ml-auto"><Arrow dir="right" /></Thumb>
            </div>
            <div className="w-[16px] shrink-0 bg-[#bdbdbd]" />
          </div>
        </div>

        <div className="ml-[2px] w-[24px] h-[505px] shrink-0 flex flex-col border border-t-white border-l-white border-r-[#808080] border-b-[#808080]">
          <VGrip className="h-[10px]" />
          {r1.map((g, i) => (
            <React.Fragment key={i}>
              {g.map((d, j) => <V key={j}><Ic>{d}</Ic></V>)}
              {i === 0 && <HSep className="h-[5px]" />}
              {i === 1 && <HSep className="h-[7px]" />}
              {i === 2 && <HSep className="h-[6px]" />}
              {i === 3 && <HSep className="h-[6px]" />}
              {i === 4 && <HSep className="h-[7px]" />}
            </React.Fragment>
          ))}
        </div>

        <div className="ml-[2px] w-[25px] shrink-0 flex flex-col">
          <div className="h-[390px] flex flex-col border border-t-white border-l-white border-r-[#808080] border-b-[#808080]">
            <VGrip className="h-[10px]" />
            {r2.map((d, i) => <div key={i} className="h-[21.8px] flex items-center justify-center shrink-0"><Ic>{d}</Ic></div>)}
          </div>
          <div className="mt-[1px] h-[106px] flex flex-col border border-t-white border-l-white border-r-[#808080] border-b-[#808080]">
            <VGrip className="h-[11px]" />
            {[0, 1, 2, 3].map((v) => <V key={v}><Order v={v} /></V>)}
          </div>
        </div>
        <div className="ml-[2px] w-[2px] h-full bg-[#808080]" />
      </div>

      {/* command window */}
      <div className="h-[61px] shrink-0 flex flex-col">
        <div className="h-[1px] bg-white ml-[6px] w-[1290px]" />
        <div className="h-[5px] border-b-2 border-b-[#303030] ml-[6px]" />
        <div className="h-[9px]" />
        <div className="flex ml-[13px] w-[1339px] h-[44px]">
          <div className="w-[7px] shrink-0 border-x border-x-white" />
          <div className="flex-1 flex flex-col bg-white border-t-2 border-t-[#202020]">
            <div className="h-[23px] flex items-start pt-[1px] border-b border-b-[#808080] pl-[4px] text-[13px] whitespace-nowrap">
              恢复缓存的视口<span className="ml-[8px] mr-[12px]">-</span>正在重生成布局。
            </div>
            <div className="flex-1 flex">
              <div className="flex-1 flex items-center pl-[5px] text-[13px]">命令:</div>
              <div className="w-[65px] shrink-0 flex bg-[#bdbdbd]">
                <div className={`flex-1 flex ${dither}`}>
                  <Thumb className="w-[15px]"><Arrow dir="left" /></Thumb>
                  <Thumb className="w-[15px]" />
                  <Thumb className="w-[15px] ml-auto"><Arrow dir="right" /></Thumb>
                </div>
                <div className="w-[2px] bg-[#bdbdbd]" />
              </div>
            </div>
          </div>
          <div className="w-[15px] shrink-0 flex flex-col bg-[#bdbdbd] pt-[3px]">
            <Thumb className="h-[10px]"><svg width="5" height="4" viewBox="0 0 5 4"><path d="M0 4h5L2.5 1z" /></svg></Thumb>
            <Thumb className="h-[10px]"><svg width="5" height="4" viewBox="0 0 5 4"><path d="M0 0h5L2.5 3z" /></svg></Thumb>
          </div>
        </div>
        <div className="h-[2px] border-b border-b-white ml-[13px]" />
      </div>

      {/* status */}
      <div className="h-[27px] shrink-0 flex items-center pl-[11px] border-t border-t-white border-b-2 border-b-[#303030] relative">
        <div className={`w-[186px] h-[18px] flex items-center pl-[1px] shrink-0 ${sunken}`}><L>678.9145, 1234.5678, 0.0000</L></div>
        <div className="flex ml-[4px] gap-[4px]">
          <Stat className="w-[28px]">捕捉</Stat>
          <Stat className="w-[28px]">栅格</Stat>
          <Stat className="w-[28px]">正交</Stat>
          <Stat on className="w-[28px]">极轴</Stat>
          <Stat on className="w-[54px]">对象捕捉</Stat>
          <Stat on className="w-[53px]">对象追踪</Stat>
          <Stat on className="w-[26px]"><L>DUCS</L></Stat>
          <Stat on className="w-[22px]"><L>DYN</L></Stat>
          <Stat className="w-[27px]">线宽</Stat>
          <Stat on className="w-[28px]">图纸</Stat>
        </div>
        <div className="ml-[24px] w-[12px] h-[18px] border border-[#808080]" />
        <div className="ml-[5px] w-[19px] h-[18px] flex items-center justify-center">
          <svg width="19" height="18" viewBox="0 0 19 18"><path d="M1 1h17v17H1z" fill="#d9e6f2" stroke="#d8392c" strokeDasharray="2 1" /><path d="M5 5h10v10H5z" fill="#a4c2dc" stroke="#2c5d94" strokeWidth="1.5" /></svg>
        </div>
        <div className="ml-[5px] w-[12px] h-[18px] border border-[#808080]" />
        <div className="ml-auto mr-[4px]">
          <Ic><path d="M2 14l5-6 3 5M4 14h8M6 6l3 3" stroke="#44688c" /><circle cx="11" cy="4" r="3" fill="#8db0d0" stroke="#44688c" /></Ic>
        </div>
        <div className="w-[132px] h-[24px] bg-white flex items-center justify-around px-[4px] relative">
          <Ic s={17}><path d="M3 13c0-3 3-6 5-6s5 3 5 6-3 1-5 1-5 2-5-1z" fill="#1b86d6" stroke="none" /><circle cx="2.5" cy="7" r="1.8" fill="#1b86d6" stroke="none" /><circle cx="6" cy="3.5" r="1.8" fill="#1b86d6" stroke="none" /><circle cx="10" cy="3.5" r="1.8" fill="#1b86d6" stroke="none" /><circle cx="13.5" cy="7" r="1.8" fill="#1b86d6" stroke="none" /></Ic>
          <span className="text-[17px] font-bold text-[#1b86d6]">中</span>
          <Ic s={17}><circle cx="8" cy="8" r="6.5" stroke="#1b86d6" strokeWidth="1.6" /><path d="M5 9.5c1 2.5 5 2.5 6 0" stroke="#1b86d6" strokeWidth="1.3" /><path d="M5.5 5.5v2M10.5 5.5v2" stroke="#1b86d6" strokeWidth="1.3" /></Ic>
          <Ic s={17}><path d="M12 1l3 3-9 9H2v-3z" fill="#1b86d6" stroke="none" /><path d="M7 15h8" stroke="#1b86d6" strokeDasharray="1 1" /></Ic>
          <div className="relative">
            <Ic s={17}><circle cx="8" cy="8" r="4.5" stroke="#1b86d6" strokeWidth="3.2" /><circle cx="8" cy="8" r="6.5" stroke="#1b86d6" strokeWidth="2" strokeDasharray="3 2" /></Ic>
            <div className="absolute top-[-2px] right-[-1px] w-[4px] h-[4px] rounded-full bg-[#e02020]" />
          </div>
        </div>
      </div>

      {/* taskbar */}
      <div className="h-[30px] shrink-0 flex items-center pl-[2px] pt-[2px]">
        <div className={`w-[47px] h-[22px] flex items-center justify-center gap-[3px] shrink-0 bg-[#bdbdbd] ${raised}`}>
          <svg width="14" height="14" viewBox="0 0 14 14" className="shrink-0">
            <path d="M1 2l5-1v5.5H1z" fill="#d8492c" /><path d="M7 1l6-1v6.5H7z" fill="#66b23c" /><path d="M1 7.5h5V13l-5-1z" fill="#3a7ad0" /><path d="M7 7.500h6V14l-6-1z" fill="#e9c52c" />
          </svg>
          开始
        </div>
        <div className="ml-[11px] w-[44px] h-[20px] flex items-center justify-center shrink-0">
          <Ic><circle cx="6" cy="8" r="4" fill="#d8a32c" /><circle cx="11" cy="7" r="3.5" fill="#6f7fc0" /></Ic>
        </div>
        <div className="flex items-center gap-[7px] shrink-0 ml-[-1px]">
          <Ic><circle cx="8" cy="8" r="7" fill="#fff" stroke="#5ab82c" strokeWidth="2" /><path d="M4 8h8a4 4 0 10-1 3" stroke="#5ab82c" strokeWidth="2" /></Ic>
          <Ic><path d="M0 0h16v16H0z" fill="#1e6fb8" stroke="none" /><path d="M3 13L13 3M5 8l8-5-3 8" stroke="#cfe6f8" /></Ic>
          <Ic><path d="M1 2h14v13H1z" fill="#e9962c" stroke="#5a8a2c" strokeWidth="1.5" /><circle cx="8" cy="9" r="4" fill="#fff" stroke="none" /><path d="M6 9h.5M9.5 9h.5" stroke="#333" /></Ic>
        </div>
        <span className="ml-[8px] mt-[-8px] text-[12px] font-bold w-[12px] shrink-0 font-['Liberation_Sans',sans-serif]">»</span>
        <div className={`ml-[2px] w-[160px] h-[23px] flex items-center pl-[4px] gap-[5px] shrink-0 bg-[#c2c2c2] ${raised}`}>
          <Ic><circle cx="8" cy="8" r="7" fill="#fff" stroke="#5ab82c" strokeWidth="2" /><path d="M4 8h8a4 4 0 10-1 3" stroke="#5ab82c" strokeWidth="2" /></Ic>
          <span className="whitespace-nowrap">【新提醒】发表帖子 <L>...</L></span>
        </div>
        <div className={`ml-[4px] w-[159px] h-[23px] flex items-center pl-[4px] gap-[2px] shrink-0 ${dither} border border-t-[#303030] border-l-[#303030] border-r-white border-b-white`}>
          <svg width="16" height="15" viewBox="0 0 16 15" className="shrink-0"><path d="M0 0h16v15H0z" fill="#2f7f8f" /><path d="M2 12L6 2h1l3 10" stroke="#fff" fill="none" /><path d="M10 8h5v6h-5z" fill="#0f3f4f" stroke="#fff" /></svg>
          <span className="whitespace-nowrap"><L>AutoCAD 2008 - [D:\...</L></span>
        </div>
        <div className={`ml-[3px] w-[160px] h-[23px] flex items-center pl-[4px] gap-[2px] shrink-0 bg-[#c2c2c2] ${raised}`}>
          <Ic><circle cx="8" cy="8" r="7" fill="#3a7ad0" stroke="none" /><path d="M3 3l9 5-3 2z" fill="#d8392c" stroke="none" /><path d="M2 12c4 3 9 1 12-4" stroke="#e9c52c" strokeWidth="2" /></Ic>
          <span className="whitespace-nowrap"><L>NX 4 - Drafting - [...</L></span>
        </div>
        <svg width="12" height="16" viewBox="0 0 12 16" className="ml-[417px] shrink-0"><path d="M0 0h12v16H0z" fill="#1b86d6" /><path d="M2 11c0-2 2-4 4-4s4 2 4 4-2 2-4 2-4 1-4-2z" fill="#fff" /><path d="M3 5h1M6 3h1M9 5h1" stroke="#fff" strokeWidth="1.5" /></svg>
        <div className="ml-[3px] w-[112px] h-[20px] bg-white border-t border-t-[#808080] border-l border-l-[#808080] flex items-center pl-[2px] text-[#777] shrink-0">搜索桌面</div>
        <div className="w-[24px] h-[20px] bg-[#d8d8d8] flex items-center justify-center shrink-0">
          <Ic><circle cx="9" cy="6" r="4.5" fill="#eaf2f8" stroke="#1e6fb8" strokeWidth="1.8" /><path d="M5.5 9.5L2 14" stroke="#1e6fb8" strokeWidth="2.2" /></Ic>
        </div>
        <div className={`ml-[8px] w-[117px] h-[23px] flex items-center pl-[3px] shrink-0 ${sunken}`}>
          <Ic><path d="M1 6h8v5H1zM2 13h6" fill="#5a8ad0" stroke="#345" /><path d="M11 2c2 2 2 5 0 7M13 1c3 3 3 7 0 10" stroke="#5ab82c" /></Ic>
          <div className="ml-[2px]"><Ic><path d="M1 3h9v8H1z" fill="#4a5a9a" stroke="#234" /><path d="M8 8l7 7M15 8l-7 7" stroke="#d82020" strokeWidth="2" /></Ic></div>
          <div className="ml-[2px]"><Ic><circle cx="8" cy="8" r="7" fill="#a8c820" stroke="#222" /><path d="M8 4v8M4 8h8" stroke="#111" strokeWidth="2.4" /></Ic></div>
          <div className="ml-[1px]"><Ic><circle cx="7" cy="7" r="6" fill="#8a8a8a" stroke="#555" /><circle cx="7" cy="7" r="2.5" fill="#ddd" stroke="none" /><path d="M11 14l3-4" stroke="#8a8ad0" strokeWidth="1.5" /></Ic></div>
          <span className="ml-[7px]"><L>21:05</L></span>
        </div>
      </div>

      {/* update badge poking in from the top */}
      <div className="absolute left-[813px] top-[-30px] w-[47px] h-[49px] rounded-full bg-[#3fb765] border-2 border-[#cfe8d4] flex items-end justify-center pb-[5px] text-white text-[11px] font-bold font-['Open_Sans',sans-serif]">49</div>
      <Stamp />
    </div>
  );
}
